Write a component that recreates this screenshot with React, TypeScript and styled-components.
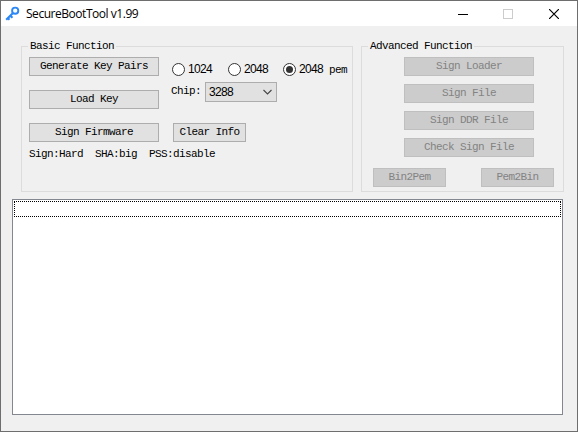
import React from "react";
import styled, { createGlobalStyle, css } from "styled-components";

const GlobalStyle = createGlobalStyle`
  * { box-sizing: border-box; }
  html, body { margin: 0; padding: 0; background: #f0f0f0; overflow: hidden; }
`;

const bitmapText = css`
  font-family: "Liberation Mono", monospace;
  font-size: 11px;
  letter-spacing: -0.6px;
  line-height: 13px;
  white-space: pre;
`;

const digitText = css`
  font-family: "Liberation Sans", Arial, sans-serif;
  font-size: 12px;
  letter-spacing: -0.67px;
  line-height: 13px;
`;

const Window = styled.div`
  width: 578px;
  height: 432px;
  display: flex;
  flex-direction: column;
  background: #f0f0f0;
  border: 1px solid #6e6e6e;
  color: #000;
  ${bitmapText}
`;

const TitleBar = styled.header`
  height: 25px;
  flex: none;
  display: flex;
  align-items: center;
  background: #fff;
  padding: 0 1px 0 4px;
`;

const Title = styled.h1`
  margin: 0 auto 0 6px;
  font: 400 12px/16px "Open Sans", "Noto Sans", sans-serif;
  letter-spacing: -0.46px;
`;

const CaptionButton = styled.button<{ $dim?: boolean }>`
  width: 46px;
  height: 25px;
  padding: 0 0 0 1px;
  border: 0;
  background: transparent;
  color: ${(p) => (p.$dim ? "#cccccc" : "#000")};
  display: flex;
  align-items: center;
  justify-content: center;
`;

const Panels = styled.main`
  display: flex;
  gap: 8px;
  padding: 14px 13px 0 20px;
`;

const Group = styled.fieldset<{ $width: number }>`
  width: ${(p) => p.$width}px;
  height: 152px;
  flex: none;
  margin: 0;
  padding: 4px 7px 0;
  border: 1px solid #dcdcdc;
  min-width: 0;
`;

const Legend = styled.legend`
  margin-left: -1px;
  padding: 0 2px;
  height: 13px;
`;

const BasicGrid = styled.div`
  display: grid;
  grid-template-columns: 130px 1fr;
  column-gap: 13px;
`;

const ButtonStack = styled.div<{ $gap: number }>`
  display: flex;
  flex-direction: column;
  align-items: center;
  gap: ${(p) => p.$gap}px;
`;

const Button = styled.button<{ $small?: boolean }>`
  width: ${(p) => (p.$small ? 73 : 130)}px;
  height: 19px;
  flex: none;
  padding: 0;
  border: 1px solid #adadad;
  background: #e1e1e1;
  color: #000;
  ${bitmapText}
  &:disabled {
    border-color: #bfbfbf;
    background: #cccccc;
    color: #838383;
  }
`;

const Options = styled.div`
  display: flex;
  flex-direction: column;
  align-items: flex-start;
`;

const RadioRow = styled.div`
  display: grid;
  grid-template-columns: 56px 55px auto;
  height: 13px;
  margin-top: 5px;
`;

const RadioLabel = styled.label`
  display: flex;
  align-items: center;
  gap: 3px;
  white-space: pre;
`;

const RadioText = styled.span`
  padding-top: 1px;
`;

const Digits = styled.span`
  ${digitText}
`;

const ChipRow = styled.div`
  display: flex;
  margin: 7px 0 21px -1px;
  height: 20px;
`;

const ChipLabel = styled.span`
  width: 34px;
  padding-top: 3px;
`;

const Combo = styled.div`
  width: 72px;
  height: 20px;
  padding: 0 4px 0 3px;
  display: flex;
  align-items: center;
  justify-content: space-between;
  border: 1px solid #adadad;
  background: #e1e1e1;
`;

const ClearButton = styled(Button)`
  margin-left: 1px;
`;

const Status = styled.p`
  margin: 6px 0 0;
`;

const FormatRow = styled.div`
  display: flex;
  justify-content: space-between;
  margin: 11px 2px 0 4px;
`;

const AdvancedStack = styled(ButtonStack)`
  padding-left: 13px;
`;

const LogBox = styled.section`
  width: 551px;
  height: 216px;
  margin: 7px 0 0 11px;
  padding: 1px;
  border: 1px solid #828790;
  background: #fff;
`;

const FocusedLine = styled.div`
  height: 16px;
  border: 1px dotted #000;
`;

const RadioIcon = ({ checked }: { checked?: boolean }) => (
  <svg width="13" height="13" viewBox="0 0 13 13">
    <circle cx="6.5" cy="6.5" r="6" fill="#fff" stroke="#333" />
    {checked && <circle cx="6.5" cy="6.5" r="3.5" fill="#333" />}
  </svg>
);

const KeyIcon = () => (
  <svg width="15" height="15" viewBox="0 0 15 15" fill="none" stroke="#2b87f5">
    <circle cx="10.2" cy="4.7" r="3.1" strokeWidth="1.9" />
    <path d="M8 7 1.2 13.8M5.3 9.7l2.2 2.1M2.8 12l1.7 1.7" strokeWidth="2.1" />
  </svg>
);

const radios = [
  { digits: "1024" },
  { digits: "2048" },
  { digits: "2048", suffix: " pem", checked: true },
];

const advancedActions = ["Sign Loader", "Sign File", "Sign DDR File", "Check Sign File"];

export default function App() {
  return (
    <>
      <GlobalStyle />
      <Window>
        <TitleBar>
          <KeyIcon />
          <Title>SecureBootTool v1.99</Title>
          <CaptionButton aria-label="Minimize">
            <svg width="12" height="10" shapeRendering="crispEdges">
              <path d="M2 5.5h10" stroke="currentColor" />
            </svg>
          </CaptionButton>
          <CaptionButton aria-label="Maximize" $dim>
            <svg width="10" height="10" shapeRendering="crispEdges">
              <path d="M.5.5h9v9h-9z" fill="none" stroke="currentColor" />
            </svg>
          </CaptionButton>
          <CaptionButton aria-label="Close">
            <svg width="10" height="10">
              <path d="m0 0 10 10M10 0 0 10" stroke="currentColor" strokeWidth="1.2" />
            </svg>
          </CaptionButton>
        </TitleBar>
        <Panels>
          <Group $width={332}>
            <Legend>Basic Function</Legend>
            <BasicGrid>
              <ButtonStack $gap={14}>
                <Button>Generate Key Pairs</Button>
                <Button>Load Key</Button>
                <Button>Sign Firmware</Button>
              </ButtonStack>
              <Options>
                <RadioRow>
                  {radios.map((r, i) => (
                    <RadioLabel key={i}>
                      <RadioIcon checked={r.checked} />
                      <RadioText>
                        <Digits>{r.digits}</Digits>
                        {r.suffix}
                      </RadioText>
                    </RadioLabel>
                  ))}
                </RadioRow>
                <ChipRow>
                  <ChipLabel>Chip:</ChipLabel>
                  <Combo>
                    <Digits>3288</Digits>
                    <svg width="9" height="6" fill="none">
                      <path d="m.5 1 4 4 4-4" stroke="#444" strokeWidth="1.1" />
                    </svg>
                  </Combo>
                </ChipRow>
                <ClearButton $small>Clear Info</ClearButton>
              </Options>
            </BasicGrid>
            <Status>{"Sign:Hard  SHA:big  PSS:disable"}</Status>
          </Group>
          <Group $width={203}>
            <Legend>Advanced Function</Legend>
            <AdvancedStack $gap={8}>
              {advancedActions.map((label) => (
                <Button key={label} disabled>
                  {label}
                </Button>
              ))}
            </AdvancedStack>
            <FormatRow>
              <Button $small disabled>Bin2Pem</Button>
              <Button $small disabled>Pem2Bin</Button>
            </FormatRow>
          </Group>
        </Panels>
        <LogBox>
          <FocusedLine />
        </LogBox>
      </Window>
    </>
  );
}
